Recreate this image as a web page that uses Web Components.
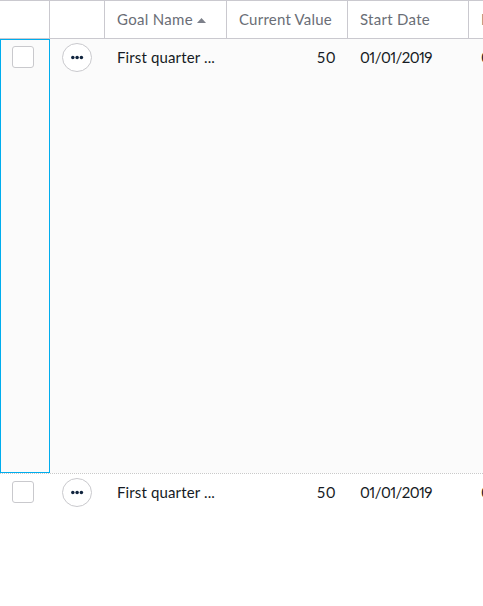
<!DOCTYPE html>
<html lang="en"><head><meta charset="utf-8"><title>Goals</title>
<style>body{margin:0;background:#fff;overflow:hidden;font:15px/20px Lato,"Open Sans",sans-serif;font-feature-settings:"pnum";color:#161b24}</style></head>
<body><goal-grid></goal-grid>
<script>
const define=(name,html,setup)=>customElements.define(name,class extends HTMLElement{
  constructor(){super();this.attachShadow({mode:'open'}).innerHTML=html;}
  connectedCallback(){if(setup)setup(this,this.shadowRoot);}
});
define('check-box',`<style>:host{display:block;box-sizing:border-box;width:22px;height:22px;border:1px solid #c9c9cd;border-radius:3px;background:#fff}</style>`);
define('more-button',`<style>:host{display:block;width:30px;height:29px}svg{display:block}</style>
<svg width="30" height="29" viewBox="0 0 30 29"><ellipse cx="15" cy="14.5" rx="14.5" ry="14" fill="#fff" stroke="#c9c9cd"/><g fill="#10243e"><circle cx="10.8" cy="14.4" r="1.75"/><circle cx="15.1" cy="14.4" r="1.75"/><circle cx="19.4" cy="14.4" r="1.75"/></g></svg>`);
define('sort-arrow',`<style>:host{display:block;margin:3px 0 0 4px}svg{display:block}</style><svg width="9" height="5" viewBox="0 0 9 5"><path d="M4.5 0L9 5H0z" fill="#7d808a"/></svg>`);
define('fit-text',`<style>:host{display:block;white-space:nowrap}span{display:inline-block}</style><span><slot></slot></span>`,(el,root)=>{
  const span=root.querySelector('span'),target=+el.getAttribute('width');
  if(target){
    const n=el.textContent.length,w=span.getBoundingClientRect().width;
    span.style.letterSpacing=(target-w)/n+'px';
    el.style.width=target+'px';
  }
});
define('header-cell',`<style>:host{display:flex;align-items:center;box-sizing:border-box;height:37px;border-right:1px solid #cac9cf;padding:0 0 1px 12px;color:#6a6e76}</style><slot></slot>`);
define('goal-row',`<style>:host{display:grid;grid-template-columns:50px 55px 122px 121px 121px 121px;box-sizing:border-box;width:590px}
:host([tall]){height:434px;background:#fbfbfb}
.select{box-sizing:border-box;padding:7px 0 0 12px}
:host([tall]) .select{padding:6px 0 0 11px;border:1px solid #00adee;height:434px}
.more{padding:4px 0 0 12px}.text{padding:8px 0 0 12px}.num{padding:8px 12px 0 0;display:flex;justify-content:flex-end}</style>
<div class="select"><check-box></check-box></div><div class="more"><more-button></more-button></div>
<div class="text"><fit-text width="98">First quarter ...</fit-text></div>
<div class="num"><fit-text width="19">50</fit-text></div>
<div class="text"><fit-text width="72">01/01/2019</fit-text></div>
<div class="text"><fit-text width="72">01/31/2019</fit-text></div>`);
define('goal-grid',`<style>:host{display:block;width:483px;height:606px;overflow:hidden}
.head{display:grid;grid-template-columns:50px 55px 122px 121px 121px 121px;width:590px;border-top:1px solid #cac9cf;border-bottom:1px solid #cac9cf}
.divider{height:1px;background:repeating-linear-gradient(90deg,#c9c9c9 0 1px,#fff 1px 2px)}</style>
<div class="head"><header-cell></header-cell><header-cell></header-cell>
<header-cell><fit-text width="76">Goal Name</fit-text><sort-arrow></sort-arrow></header-cell>
<header-cell><fit-text width="93">Current Value</fit-text></header-cell>
<header-cell><fit-text width="70">Start Date</fit-text></header-cell><header-cell><fit-text>End Date</fit-text></header-cell></div>
<goal-row tall></goal-row><div class="divider"></div><goal-row></goal-row>`);
</script></body></html>
